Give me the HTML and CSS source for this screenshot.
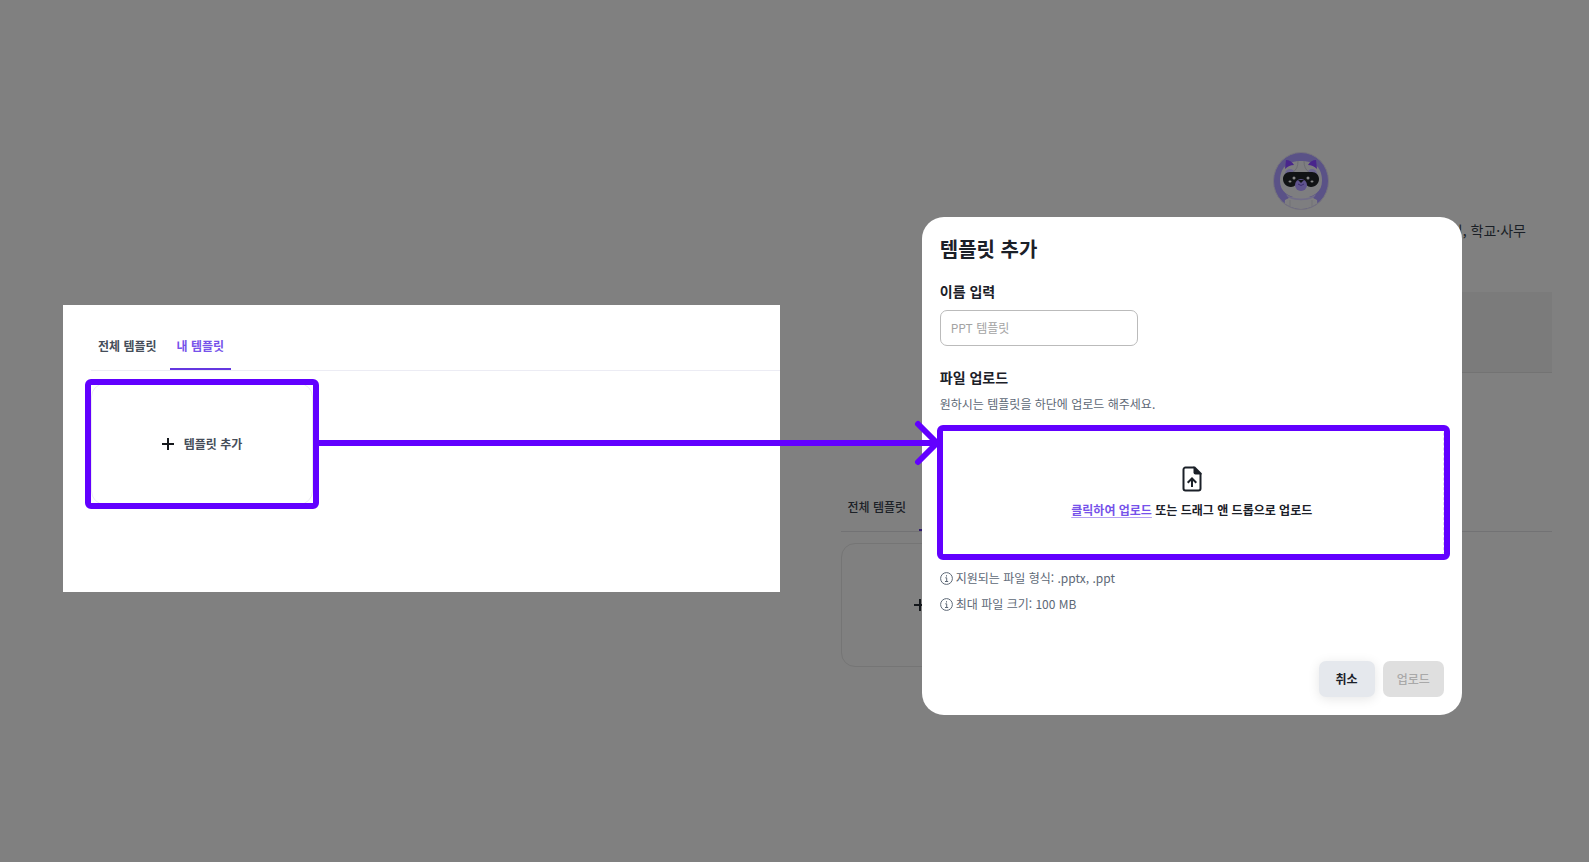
FILE: index.html
```
<!DOCTYPE html>
<html lang="ko">
<head>
    <meta charset="UTF-8">
    <meta name="viewport" content="width=device-width, initial-scale=1.0">
    <title>템플릿 추가</title>
    <link rel="stylesheet" href="styles.css">
</head>
<body>
    <main class="guide">
        <section class="step step-list">
            <div class="panel">
                <nav class="tabs">
                    <a class="tab" href="#all">전체 템플릿</a>
                    <a class="tab active" href="#mine">내 템플릿</a>
                </nav>
                <button class="add-card marked" type="button">
                    <svg class="plus" viewBox="0 0 12 12"><path d="M6 0v12M0 6h12" /></svg>
                    <span>템플릿 추가</span>
                </button>
            </div>
        </section>

        <section class="step step-upload">
            <!-- page behind the dialog -->
            <div class="behind">
                <div class="intro">
                    <svg class="avatar" viewBox="0 0 56 58">
                        <defs>
                            <clipPath id="round"><ellipse cx="28" cy="29" rx="27" ry="28" /></clipPath>
                        </defs>
                        <ellipse cx="28" cy="29" rx="27.5" ry="28.5" fill="#5a5287" />
                        <g clip-path="url(#round)">
                            <path d="M11 58l1-10 6-3h20l6 3 1 10z" fill="#808080" />
                            <path d="M7 29c0-10 4-20 21-20s21 10 21 20-8 17-21 17S7 39 7 29z" fill="#7e7e80" />
                            <path d="M13 42c8 6 22 6 30 0-2 5-7 7-15 7s-13-2-15-7z" fill="#726e88" />
                            <path d="M12 51l4-5c8 3 16 3 24 0l4 5 3 8H9z" fill="#7e7e80" />
                            <path d="M17 48v9M39 48v9" stroke="#727277" fill="none" />
                        </g>
                        <path d="M12 17l1-9q5 0 8 5-5 0-9 4zM44 17l-1-9q-5 0-8 5 5 0 9 4z" fill="#49258c" />
                        <circle cx="17" cy="22" r="5" fill="#6c6690" />
                        <circle cx="39" cy="22" r="5" fill="#6c6690" />
                        <path d="M25 9q0 8-5 11M31 9q0 8 5 11" stroke="#6d6d72" fill="none" />
                        <path d="M17 20h22c4 0 7 3 7 7s-3 8-8 8c-4 0-5-4-10-4s-6 4-10 4c-5 0-8-4-8-8s3-7 7-7z" fill="#111315" />
                        <circle cx="28" cy="33" r="6" fill="#5f538d" />
                        <path d="M25 28h6l-3 3z" fill="#111315" />
                        <path d="M25 32q3 3 6 0" stroke="#3b2c6e" fill="none" />
                        <circle cx="21" cy="26" r="1.5" fill="#888" />
                        <circle cx="35" cy="26" r="1.5" fill="#888" />
                        <ellipse cx="17" cy="29.500" rx="1.500" ry="1" fill="#888" />
                        <ellipse cx="39" cy="29.500" rx="1.500" ry="1" fill="#888" />
                        <ellipse cx="28" cy="29" rx="27.500" ry="28.500" fill="none" stroke="#75737d" />
                    </svg>
                    <p class="intro-text">기, 학교·사무</p>
                    <div class="band"></div>
                </div>
                <nav class="tabs">
                    <a class="tab" href="#all">전체 템플릿</a>
                    <a class="tab active" href="#mine">내 템플릿</a>
                </nav>
                <button class="add-card" type="button" aria-label="템플릿 추가">
                    <svg class="plus" viewBox="0 0 12 12"><path d="M6 0v12M0 6h12" /></svg>
                </button>
            </div>

            <div class="overlay">
                <form class="modal">
                    <h2>템플릿 추가</h2>
                    <label class="field-label" for="name">이름 입력</label>
                    <input class="name-input" id="name" type="text" placeholder="PPT 템플릿">
                    <h3 class="field-label upload-label">파일 업로드</h3>
                    <p class="desc">원하시는 템플릿을 하단에 업로드 해주세요.</p>
                    <label class="dropzone" for="file">
                        <svg class="file-icon" viewBox="0 0 20 26">
                            <path d="M12 1.500H3.500a2 2 0 0 0-2 2v19a2 2 0 0 0 2 2h13a2 2 0 0 0 2-2V7" fill="none" stroke="#1b2028" stroke-width="2" />
                            <path d="M11.500.5h1.500L19.500 7v1.500h-6a2 2 0 0 1-2-2z" fill="#1b2028" />
                            <path d="M10 21v-8M5.700 16.800L10 12.500l4.300 4.300" fill="none" stroke="#1b2028" stroke-width="2" />
                        </svg>
                        <span><span class="link">클릭하여 업로드</span> 또는 드래그 앤 드롭으로 업로드</span>
                        <input class="file-input" id="file" type="file" accept=".pptx,.ppt">
                    </label>
                    <ul class="notes">
                        <li>
                            <svg class="info" viewBox="0 0 13 13"><circle cx="6.500" cy="6.500" r="5.900" /><path d="M5.300 5.800h1.400v3.700M5 9.500h3.200M6.500 3.200v1.300" /></svg>
                            지원되는 파일 형식: .pptx, .ppt
                        </li>
                        <li>
                            <svg class="info" viewBox="0 0 13 13"><circle cx="6.500" cy="6.500" r="5.900" /><path d="M5.300 5.800h1.400v3.700M5 9.500h3.200M6.500 3.200v1.300" /></svg>
                            최대 파일 크기: 100 MB
                        </li>
                    </ul>
                    <div class="actions">
                        <button class="btn btn-cancel" type="button">취소</button>
                        <button class="btn btn-upload" type="submit" disabled>업로드</button>
                    </div>
                </form>
            </div>
        </section>

        <div class="arrow">
            <svg class="arrow-head" viewBox="0 0 26 46"><path d="M4 4l19 19L4 42" /></svg>
        </div>
    </main>
</body>
</html>
```
FILE: styles.css
```
* {
    box-sizing: border-box;
}
body {
    margin: 0;
    background-color: #808080;
    color: #1b2028;
    font-family: "Noto Sans CJK KR", "Noto Sans", sans-serif;
    font-size: 12px;
    line-height: 20px;
}
h2, h3, p, ul {
    margin: 0;
    padding: 0;
}
button, input {
    font: inherit;
}
.guide {
    position: relative;
    display: grid;
    grid-template-columns: 1fr 1fr;
    min-height: 100vh;
}
.step-list {
    padding: 305px 15px 0 63px;
}
.panel {
    background-color: #fff;
    padding: 24px 0 87px 28px;
}

/* tabs */
.tabs {
    display: flex;
    gap: 6px;
    border-bottom: 1px solid #ececf4;
}
.tab {
    padding: 7px 7px 12px;
    border-bottom: 2px solid transparent;
    color: #454d59;
    font-weight: 700;
    text-decoration: none;
}
.tab.active {
    color: #7652ea;
    border-bottom-color: #6437e0;
}

.add-card {
    position: relative;
    display: flex;
    align-items: center;
    justify-content: center;
    gap: 10px;
    width: 222px;
    height: 122px;
    margin-top: 12px;
    border: 1px solid #ececf0;
    border-radius: 14px;
    background: none;
    color: #454d59;
    font-weight: 700;
}
.plus {
    width: 12px;
    height: 12px;
    fill: none;
    stroke: #15181c;
    stroke-width: 2;
}

/* purple frames */
.marked::after,
.dropzone::after {
    content: '';
    position: absolute;
    border: 6px solid #6200ff;
    border-radius: 6px;
}
.marked::after {
    inset: -5px -7px;
}

/* dimmed page */
.step-upload {
    position: relative;
}
.behind {
    padding: 152px 37px 0 46px;
}
.intro {
    display: flex;
    flex-direction: column;
    align-items: center;
    width: 502px;
    margin-left: auto;
}
.avatar {
    width: 56px;
    height: 58px;
}
.intro-text {
    align-self: flex-end;
    margin: 10px 26px 52px 0;
    color: #1a1f26;
    font-size: 14px;
}
.band {
    width: 100%;
    height: 81px;
    background-color: #7b7b7b;
    border-bottom: 1px solid #737373;
}
.behind .tabs {
    margin-top: 117px;
    border-bottom-color: #727274;
}
.behind .tab {
    color: #1c2127;
    font-weight: 500;
}
.behind .tab.active {
    border-bottom-color: #321c70;
}
.behind .add-card {
    justify-content: flex-start;
    height: 124px;
    margin-top: 11px;
    padding-left: 72px;
    border-color: #757575;
}

/* dialog */
.overlay {
    position: absolute;
    inset: 0;
    display: flex;
    align-items: center;
    justify-content: center;
    padding-top: 70px;
}
.modal {
    width: 540px;
    padding: 18px;
    border-radius: 22px;
    background-color: #fff;
}
.modal h2 {
    margin-bottom: 18px;
    font-size: 20px;
    line-height: 28px;
    font-weight: 700;
}
.field-label {
    display: block;
    font-size: 14px;
    font-weight: 700;
}
.name-input {
    display: block;
    width: 198px;
    height: 36px;
    margin-top: 9px;
    padding: 0 10px 2px;
    border: 1px solid #bbb;
    border-radius: 7px;
    background-color: #fff;
}
.name-input::placeholder {
    color: #a3a3a3;
}
.upload-label {
    margin-top: 21px;
}
.desc {
    margin: 7px 0 14px;
    color: #5d6876;
}
.dropzone {
    position: relative;
    display: flex;
    flex-direction: column;
    align-items: center;
    justify-content: center;
    gap: 8px;
    height: 129px;
    border: 1px dashed #dcdde4;
    border-radius: 6px;
    font-weight: 700;
    cursor: pointer;
}
.dropzone::after {
    inset: -4px -7px -4px -4px;
}
.file-icon {
    width: 20px;
    height: 26px;
}
.link {
    color: #7652ea;
    text-decoration: underline 1px #b4a0f3;
    text-underline-offset: 2px;
}
.file-input {
    position: absolute;
    width: 1px;
    height: 1px;
    opacity: 0;
}
.notes {
    display: grid;
    gap: 6px;
    margin-top: 11px;
    color: #5d6876;
    list-style: none;
}
.notes li {
    display: flex;
    align-items: center;
    gap: 3px;
}
.info {
    width: 13px;
    height: 13px;
    fill: none;
    stroke: #5d6876;
}
.actions {
    display: flex;
    justify-content: flex-end;
    gap: 8px;
    margin-top: 47px;
}
.btn {
    height: 36px;
    border: none;
    border-radius: 7px;
    font-weight: 500;
}
.btn-cancel {
    padding: 0 17px;
    background-color: #e5e8ed;
    color: #1b2028;
    font-weight: 700;
    box-shadow: 0 2px 12px rgba(0, 0, 0, 0.1);
}
.btn-upload {
    padding: 0 14px;
    background-color: #dfdfdf;
    color: #a9a9a9;
}

/* arrow from the card to the drop area */
.arrow {
    position: absolute;
    top: 440px;
    left: 319px;
    right: calc(25% + 254px);
    height: 6px;
    background-color: #6200ff;
}
.arrow-head {
    position: absolute;
    top: -20px;
    right: -2px;
    width: 26px;
    height: 46px;
    fill: none;
    stroke: #6200ff;
    stroke-width: 6;
    stroke-linecap: round;
    stroke-linejoin: round;
}
```
